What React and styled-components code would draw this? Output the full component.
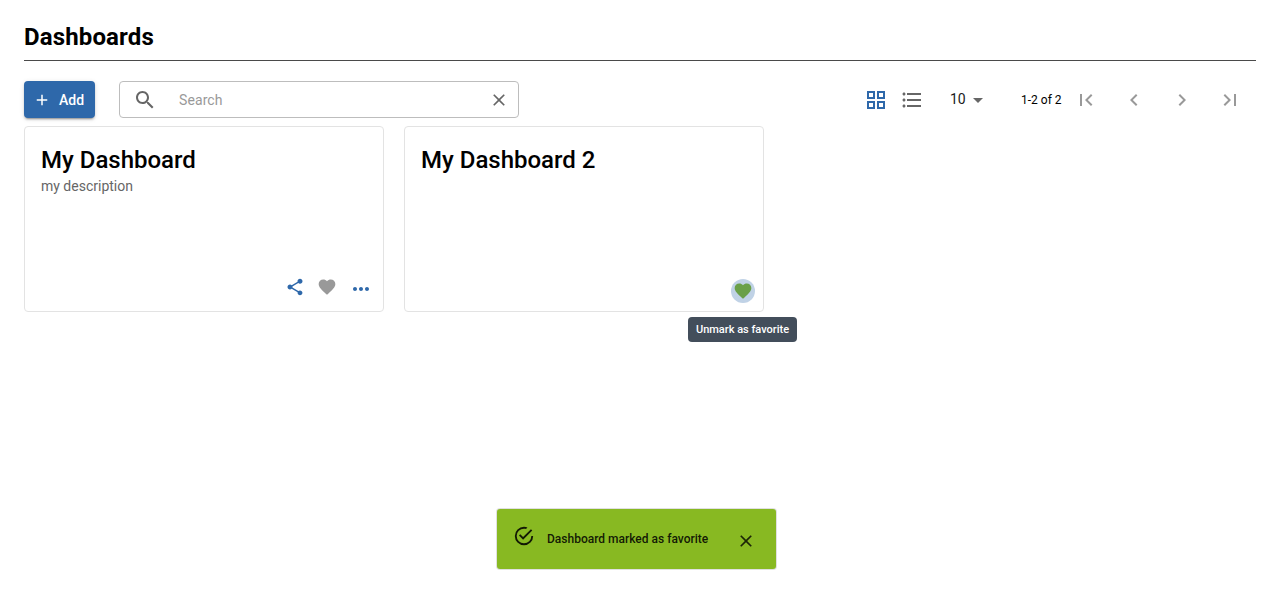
import React from "react";
import styled, { createGlobalStyle } from "styled-components";

const GlobalStyle = createGlobalStyle`
  *, *::before, *::after { box-sizing: border-box; }
  body { margin: 0; background: #fff; color: #000; font-family: Roboto, "Liberation Sans", sans-serif; }
  button { font: inherit; }
  h1, h2, p { margin: 0; }
`;

const paths = {
  add: "M19 13h-6v6h-2v-6H5v-2h6V5h2v6h6v2z",
  search:
    "M15.5 14h-.79l-.28-.27C15.41 12.59 16 11.11 16 9.5 16 5.91 13.09 3 9.5 3S3 5.91 3 9.5 5.91 16 9.5 16c1.61 0 3.09-.59 4.23-1.57l.27.28v.79l5 4.99L20.49 19l-4.99-5zm-6 0C7.01 14 5 11.99 5 9.5S7.01 5 9.5 5 14 7.01 14 9.5 11.99 14 9.5 14z",
  close:
    "M19 6.41 17.59 5 12 10.59 6.41 5 5 6.41 10.59 12 5 17.59 6.41 19 12 13.41 17.59 19 19 17.59 13.41 12z",
  grid: "M3 3v8h8V3H3zm6 6H5V5h4v4zm-6 4v8h8v-8H3zm6 6H5v-4h4v4zm4-16v8h8V3h-8zm6 6h-4V5h4v4zm-6 4v8h8v-8h-8zm6 6h-4v-4h4v4z",
  list: "M4 10.5c-.83 0-1.5.67-1.5 1.5s.67 1.5 1.5 1.5 1.5-.67 1.5-1.5-.67-1.5-1.5-1.5zm0-6c-.83 0-1.5.67-1.5 1.5S3.17 7.5 4 7.5 5.5 6.83 5.5 6 4.83 4.5 4 4.5zm0 12c-.83 0-1.5.68-1.5 1.5s.68 1.5 1.5 1.5 1.5-.68 1.5-1.5-.67-1.5-1.5-1.5zM7 19h14v-2H7v2zm0-6h14v-2H7v2zm0-8v2h14V5H7z",
  dropdown: "m7 10 5 5 5-5z",
  first: "M18.41 16.59 13.82 12l4.59-4.59L17 6l-6 6 6 6zM6 6h2v12H6z",
  previous: "M15.41 16.59 10.83 12l4.58-4.59L14 6l-6 6 6 6 1.41-1.41z",
  next: "M8.59 16.59 13.17 12 8.59 7.41 10 6l6 6-6 6-1.41-1.41z",
  last: "M5.59 7.41 10.18 12l-4.59 4.59L7 18l6-6-6-6zM16 6h2v12h-2z",
  share:
    "M18 16.08c-.76 0-1.44.3-1.96.77L8.91 12.7c.05-.23.09-.46.09-.7s-.04-.47-.09-.7l7.05-4.11c.54.5 1.25.81 2.04.81 1.66 0 3-1.34 3-3s-1.34-3-3-3-3 1.34-3 3c0 .24.04.47.09.7L8.04 9.81C7.5 9.31 6.79 9 6 9c-1.66 0-3 1.34-3 3s1.34 3 3 3c.79 0 1.5-.31 2.04-.81l7.12 4.16c-.05.21-.08.43-.08.65 0 1.61 1.31 2.92 2.92 2.92s2.92-1.31 2.92-2.92-1.31-2.92-2.92-2.92z",
  heart:
    "m12 21.35-1.45-1.32C5.4 15.36 2 12.28 2 8.5 2 5.42 4.42 3 7.5 3c1.74 0 3.41.81 4.5 2.09C13.09 3.81 14.76 3 16.5 3 19.58 3 22 5.42 22 8.5c0 3.78-3.4 6.86-8.55 11.54L12 21.35z",
  more: "M6 10c-1.1 0-2 .9-2 2s.9 2 2 2 2-.9 2-2-.9-2-2-2zm12 0c-1.1 0-2 .9-2 2s.9 2 2 2 2-.9 2-2-.9-2-2-2zm-6 0c-1.1 0-2 .9-2 2s.9 2 2 2 2-.9 2-2-.9-2-2-2z",
  success:
    "M20,12A8,8 0 0,1 12,20A8,8 0 0,1 4,12A8,8 0 0,1 12,4C12.76,4 13.5,4.11 14.2,4.31L15.77,2.74C14.61,2.26 13.34,2 12,2A10,10 0 0,0 2,12A10,10 0 0,0 12,22A10,10 0 0,0 22,12M7.91,10.08L6.5,11.5L11,16L21,6L19.59,4.58L11,13.17L7.91,10.08Z",
};

const Svg = styled.svg`
  display: block;
  flex: none;
  fill: currentColor;
`;

const Icon = ({ name, size = 24 }) => (
  <Svg viewBox="0 0 24 24" width={size} height={size} aria-hidden="true">
    <path d={paths[name]} />
  </Svg>
);

const Page = styled.main`
  position: relative;
  height: 590px;
  padding: 21px 24px 0;
  overflow: hidden;
`;

const Header = styled.header`
  height: 40px;
  border-bottom: 1px solid #4a4a4a;
`;

const Title = styled.h1`
  font-size: 24px;
  font-weight: 700;
  line-height: 32px;
  letter-spacing: 0.14px;
`;

const Toolbar = styled.div`
  display: flex;
  align-items: center;
  height: 37px;
  margin-top: 20px;
`;

const AddButton = styled.button`
  display: flex;
  align-items: center;
  gap: 8px;
  width: 71px;
  height: 37px;
  padding: 0 9px;
  border: 0;
  border-radius: 4px;
  background: #2e68aa;
  color: #fff;
  font-size: 14px;
  font-weight: 500;
  line-height: 24px;
  box-shadow: 0 3px 1px -2px rgba(0, 0, 0, 0.2), 0 2px 2px rgba(0, 0, 0, 0.14), 0 1px 5px rgba(0, 0, 0, 0.12);
`;

const SearchField = styled.label`
  display: flex;
  align-items: center;
  width: 400px;
  height: 37px;
  margin-left: 24px;
  padding: 0 9px 0 13px;
  border: 1px solid #bdbdbd;
  border-radius: 4px;
  color: #666;
`;

const SearchInput = styled.input`
  flex: 1;
  min-width: 0;
  margin-left: 22px;
  padding: 0;
  border: 0;
  outline: 0;
  background: none;
  font: 400 14px/20px Roboto, "Liberation Sans", sans-serif;
  letter-spacing: 0.1px;
  &::placeholder { color: #999; opacity: 1; }
`;

const IconButton = styled.button`
  display: flex;
  align-items: center;
  justify-content: center;
  flex: none;
  width: ${(p) => p.$size || 24}px;
  height: ${(p) => p.$size || 24}px;
  padding: 0;
  border: 0;
  border-radius: 50%;
  background: ${(p) => p.$background || "none"};
  color: ${(p) => p.$color || "#666"};
`;

const Controls = styled.div`
  display: flex;
  align-items: center;
  margin-left: auto;
`;

const ViewSwitch = styled.div`
  display: flex;
  gap: 12px;
`;

const PageSize = styled.div`
  display: flex;
  align-items: center;
  justify-content: space-between;
  width: 40px;
  margin-left: 26px;
  color: #666;
`;

const PageSizeValue = styled.span`
  color: #1a1a1a;
  font-size: 14px;
  line-height: 20px;
  margin-top: -2px;
`;

const Range = styled.span`
  width: 41px;
  margin-left: 31px;
  font-size: 12px;
  line-height: 20px;
  white-space: nowrap;
`;

const Pager = styled.nav`
  display: flex;
  gap: 24px;
  margin: 0 14px 0 12px;
`;

const Cards = styled.section`
  display: flex;
  gap: 20px;
  margin-top: 8px;
`;

const Card = styled.article`
  display: flex;
  flex-direction: column;
  width: 360px;
  height: 186px;
  padding: 17px 8px 8px 16px;
  border: 1px solid #e3e3e3;
  border-radius: 4px;
`;

const CardTitle = styled.h2`
  font-size: 24px;
  font-weight: 500;
  line-height: 32px;
`;

const Description = styled.p`
  color: #666;
  font-size: 14px;
  line-height: 20px;
`;

const Actions = styled.div`
  display: flex;
  align-items: flex-end;
  justify-content: flex-end;
  margin-top: auto;
  gap: 8px;
  padding-right: ${(p) => p.$inset || 0}px;
  padding-bottom: ${(p) => p.$lift || 0}px;
`;

const MoreButton = styled(IconButton)`
  margin-left: 2px;
  transform: translateY(2px);
`;

const Tooltip = styled.div`
  position: absolute;
  left: 688px;
  top: 317px;
  width: 109px;
  height: 25px;
  border-radius: 4px;
  background: #434e5b;
  color: #fff;
  font-size: 11px;
  font-weight: 500;
  line-height: 25px;
  text-align: center;
  white-space: nowrap;
`;

const Toast = styled.div`
  position: absolute;
  left: 497px;
  top: 509px;
  display: flex;
  align-items: center;
  width: 279px;
  height: 60px;
  padding: 0 20px 0 16px;
  border-radius: 3px;
  background: #88b922;
  color: rgba(0, 0, 0, 0.87);
  box-shadow: 0 0 0 1px rgba(0, 0, 0, 0.12);
`;

const ToastStatus = styled.span`
  margin: 0 12px 6px 0;
`;

const ToastText = styled.span`
  font-size: 12px;
  font-weight: 500;
  line-height: 20px;
  white-space: nowrap;
`;

const ToastClose = styled(IconButton)`
  margin: 4px 0 0 auto;
`;

export default function App() {
  return (
    <>
      <GlobalStyle />
      <Page>
        <Header>
          <Title>Dashboards</Title>
        </Header>
        <Toolbar>
          <AddButton>
            <Icon name="add" size={18} />
            Add
          </AddButton>
          <SearchField>
            <Icon name="search" />
            <SearchInput placeholder="Search" />
            <IconButton $size={20} aria-label="Clear search">
              <Icon name="close" size={20} />
            </IconButton>
          </SearchField>
          <Controls>
            <ViewSwitch>
              <IconButton $color="#2e68aa" aria-label="Grid view"><Icon name="grid" /></IconButton>
              <IconButton aria-label="List view"><Icon name="list" /></IconButton>
            </ViewSwitch>
            <PageSize>
              <PageSizeValue>10</PageSizeValue>
              <Icon name="dropdown" />
            </PageSize>
            <Range>1-2 of 2</Range>
            <Pager>
              {["first", "previous", "next", "last"].map((name) => (
                <IconButton key={name} $color="#999" aria-label={name}><Icon name={name} /></IconButton>
              ))}
            </Pager>
          </Controls>
        </Toolbar>
        <Cards>
          <Card>
            <CardTitle>My Dashboard</CardTitle>
            <Description>my description</Description>
            <Actions $inset={2} $lift={4}>
              <IconButton $color="#2e68aa" aria-label="Share"><Icon name="share" size={20} /></IconButton>
              <IconButton $color="#999" aria-label="Mark as favorite"><Icon name="heart" size={20} /></IconButton>
              <MoreButton $color="#2e68aa" aria-label="More actions"><Icon name="more" /></MoreButton>
            </Actions>
          </Card>
          <Card>
            <CardTitle>My Dashboard 2</CardTitle>
            <Actions>
              <IconButton $color="#6aa048" $background="#c0d2e6" aria-label="Unmark as favorite">
                <Icon name="heart" size={20} />
              </IconButton>
            </Actions>
          </Card>
        </Cards>
        <Tooltip role="tooltip">Unmark as favorite</Tooltip>
        <Toast role="status">
          <ToastStatus><Icon name="success" size={22} /></ToastStatus>
          <ToastText>Dashboard marked as favorite</ToastText>
          <ToastClose $size={20} $color="rgba(0, 0, 0, 0.8)" aria-label="Close">
            <Icon name="close" size={20} />
          </ToastClose>
        </Toast>
      </Page>
    </>
  );
}
